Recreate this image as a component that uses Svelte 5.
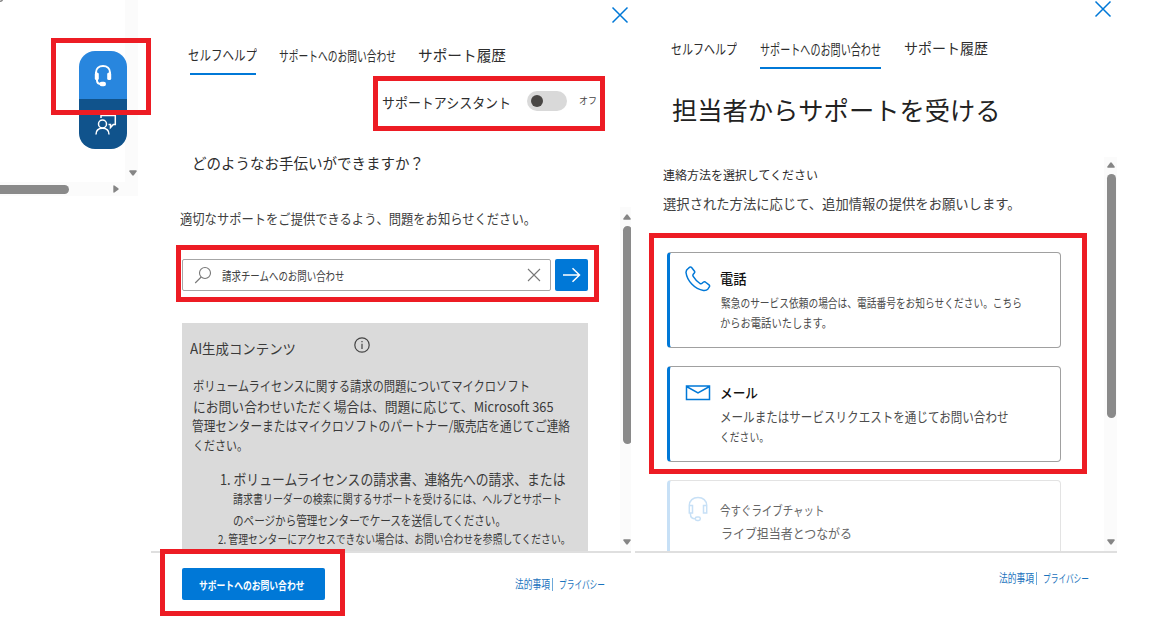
<script>
  // Condenses or stretches a label so that it fills the measure given for it.
  function fit(node, width) {
    const apply = (w) => {
      node.style.transform = 'none';
      const natural = node.getBoundingClientRect().width;
      if (natural) node.style.transform = `scaleX(${w / natural})`;
    };
    apply(width);
    return { update: apply };
  }

  const leftTabs = [
    { text: 'セルフヘルプ', w: 69, size: 14, active: true },
    { text: 'サポートへのお問い合わせ', w: 117, size: 14 },
    { text: 'サポート履歴', w: 88, size: 15 }
  ];
  const rightTabs = [
    { text: 'セルフヘルプ', w: 66, size: 14 },
    { text: 'サポートへのお問い合わせ', w: 121, size: 14.3, active: true },
    { text: 'サポート履歴', w: 84, size: 14.5 }
  ];
  const answer = [
    { text: 'ボリュームライセンスに関する請求の問題についてマイクロソフト', w: 337, size: 13.3 },
    { text: 'にお問い合わせいただく場合は、問題に応じて、Microsoft 365', w: 360.5, size: 13.6 },
    { text: '管理センターまたはマイクロソフトのパートナー/販売店を通じてご連絡', w: 378, size: 13.3 },
    { text: 'ください。', w: 55, size: 12.6 }
  ];
</script>

{#snippet label(text, w, size)}
  <span class="label" style="width:{w}px;font-size:{size}px"><span class="ink" use:fit={w}>{text}</span></span>
{/snippet}

{#snippet closeIcon()}
  <svg class="close" width="18" height="18" viewBox="0 0 18 18"><path d="M1.5 1.5 16.5 16.5M16.5 1.5 1.5 16.5" /></svg>
{/snippet}

{#snippet legal()}
  <div class="legal">
    {@render label('法的事項', 35, 12)}
    <i></i>
    {@render label('プライバシー', 46, 11.3)}
  </div>
{/snippet}

{#snippet arrow(dir)}
  <svg class="tri {dir}" width="8" height="6" viewBox="0 0 8 6"><path d="M1 5.7Q-.2 5.7.4 4.6L3.2.7Q4 0 4.8.7L7.6 4.6Q8.2 5.7 7 5.7Z" /></svg>
{/snippet}

<main>
  <section class="dock">
    <div class="canvas">
      <svg class="corner" width="5" height="4" viewBox="0 0 5 4"><path d="M0 1.200Q1.700 1.400 2.500 0" /></svg>
      <div class="pill">
        <button class="help" aria-label="help">
          <svg width="20" height="24" viewBox="0 0 20 24">
            <path d="M3 10V8.500C3 4.500 6 2 10 2S17 4.500 17 8.500V10" fill="none" stroke="#fff" stroke-width="2" />
            <rect x="1.800" y="8.500" width="4" height="7.500" rx="1.600" fill="#fff" />
            <rect x="14.200" y="8.500" width="4" height="7.500" rx="1.600" fill="#fff" />
            <path d="M4 14.500V16.500C4 19 6 20 8.500 20" fill="none" stroke="#fff" stroke-width="2" />
            <rect x="6.500" y="17.800" width="6.500" height="4.500" rx="2.200" fill="#fff" />
          </svg>
        </button>
        <button class="feedback" aria-label="feedback">
          <svg width="24" height="24" viewBox="0 0 24 24" fill="none" stroke="#fff" stroke-width="1.500">
            <path d="M8 7V4.500H22.300V13.500H20.300L17.500 16.500V13.500H15.500" />
            <circle cx="9.500" cy="13" r="4" />
            <path d="M3 23.500C3 19.500 5.500 17.200 9.500 17.200S16 19.500 16 23.500" />
          </svg>
        </button>
      </div>
    </div>
    <div class="vtrack">{@render arrow('down')}</div>
    <div class="htrack"><i></i>{@render arrow('right')}</div>
  </section>

  <section class="panel first">
    <header>{@render closeIcon()}</header>
    <nav>
      {#each leftTabs as tab}
        <div class="tab" class:active={tab.active}>{@render label(tab.text, tab.w, tab.size)}</div>
      {/each}
    </nav>
    <div class="assistant">
      {@render label('サポートアシスタント', 129, 14)}
      <div class="toggle"><i></i></div>
      <small>{@render label('オフ', 18, 9.5)}</small>
    </div>
    <h2>{@render label('どのようなお手伝いができますか？', 232, 15)}</h2>

    <div class="body">
      <div class="scroll">
        <p class="lead">{@render label('適切なサポートをご提供できるよう、問題をお知らせください。', 356, 13.7)}</p>
        <div class="search">
          <div class="field">
            <svg width="18" height="18" viewBox="0 0 18 18"><circle cx="11" cy="7" r="5.500" /><path d="M7.200 11 1.200 17" /></svg>
            {@render label('請求チームへのお問い合わせ', 122.5, 12.3)}
            <svg class="clear" width="14" height="14" viewBox="0 0 14 14"><path d="M1 1 13 13M13 1 1 13" /></svg>
          </div>
          <button class="go" aria-label="search">
            <svg width="20" height="16" viewBox="0 0 20 16"><path d="M1 8H17.500M10.500 1.200 17.500 8 10.500 14.800" /></svg>
          </button>
        </div>
        <article>
          <div class="title">
            {@render label('AI生成コンテンツ', 106, 14)}
            <svg width="16" height="16" viewBox="0 0 16 16"><circle cx="8" cy="8" r="7.200" /><path d="M8 6.700V12M8 4V5.300" /></svg>
          </div>
          <div class="answer">
            {#each answer as line}
              <p>{@render label(line.text, line.w, line.size)}</p>
            {/each}
          </div>
          <div class="steps">
            <p class="one">{@render label('1. ボリュームライセンスの請求書、連絡先への請求、または', 345.5, 14.8)}</p>
            <p class="sub">{@render label('請求書リーダーの検索に関するサポートを受けるには、ヘルプとサポート', 329, 12.3)}</p>
            <p class="sub">{@render label('のページから管理センターでケースを送信してください。', 273, 12.9)}</p>
            <p class="two">{@render label('2. 管理センターにアクセスできない場合は、お問い合わせを参照してください。', 352.5, 12)}</p>
          </div>
        </article>
      </div>
      <div class="bar">{@render arrow('up')}<i></i>{@render arrow('down')}</div>
    </div>
    <footer>
      <button class="contact">{@render label('サポートへのお問い合わせ', 105.5, 11)}</button>
      {@render legal()}
    </footer>
  </section>

  <section class="panel second">
    <header>{@render closeIcon()}</header>
    <nav>
      {#each rightTabs as tab}
        <div class="tab" class:active={tab.active}>{@render label(tab.text, tab.w, tab.size)}</div>
      {/each}
    </nav>
    <h1>{@render label('担当者からサポートを受ける', 328.5, 25.3)}</h1>
    <div class="body">
      <div class="scroll">
        <p class="choose">{@render label('連絡方法を選択してください', 155, 12.2)}</p>
        <p class="note">{@render label('選択された方法に応じて、追加情報の提供をお願いします。', 357.5, 13.7)}</p>
        <div class="card">
          <svg width="26" height="26" viewBox="0 0 26 26"><path d="M3.300 2.300 4.800 1.200Q5.800.7 6.600 1.600L9.500 5.200Q10.100 6.200 9.300 7.100L8.100 8.500Q7.600 9.400 8.200 10.300Q10.800 14.600 15 17.500Q16.200 18.200 17.100 17.300L18.500 16Q19.300 15.400 20.300 16L24 18.800Q25 19.700 24.300 20.900L23 22.900Q21.500 24.700 18.500 24.400C9.500 23.200 2 14.500 1 6.500Q.9 3.800 3.300 2.300Z" /></svg>
          <div class="copy">
            <h3>{@render label('電話', 26.5, 13.5)}</h3>
            <p class="in">{@render label('緊急のサービス依頼の場合は、電話番号をお知らせください。こちら', 301, 12.5)}</p>
            <p>{@render label('からお電話いたします。', 112, 12.2)}</p>
          </div>
        </div>
        <div class="card mail">
          <svg width="26" height="26" viewBox="0 0 26 26"><path d="M1.500 6H24.500V19.500H1.500ZM1.500 6.500 13 13 24.500 6.500" /></svg>
          <div class="copy">
            <h3>{@render label('メール', 38, 13.5)}</h3>
            <p>{@render label('メールまたはサービスリクエストを通じてお問い合わせ', 288.5, 13.5)}</p>
            <p>{@render label('ください。', 49, 12)}</p>
          </div>
        </div>
        <div class="card muted">
          <svg width="26" height="26" viewBox="0 0 26 26"><path d="M4.300 10V9.500C4.300 4.500 8 1.500 13 1.500S21.700 4.500 21.700 9.500V10M4.300 9.500H7.500V17H4.300ZM18.500 9.500H21.700V17H18.500ZM5.500 17V18.500C5.500 21.500 7 22.700 10.300 22.700" /><rect x="10.300" y="21" width="5" height="3.500" rx="1.700" /></svg>
          <div class="copy">
            <h3>{@render label('今すぐライブチャット', 104.5, 12.8)}</h3>
            <p class="in">{@render label('ライブ担当者とつながる', 131, 13)}</p>
          </div>
        </div>
      </div>
      <div class="bar">{@render arrow('up')}<i></i>{@render arrow('down')}</div>
    </div>
    <footer>{@render legal()}</footer>
  </section>

  <div class="mark m1"></div>
  <div class="mark m2"></div>
  <div class="mark m3"></div>
  <div class="mark m4"></div>
  <div class="mark m5"></div>
</main>

<style>
  :global(body) { margin: 0; background: #fff; }
  main {
    position: relative;
    display: grid;
    grid-template-columns: 151px 480px 482px;
    column-gap: 0;
    width: 1149px;
    height: 634px;
    overflow: hidden;
    font-family: 'Noto Sans CJK JP', 'Noto Sans', sans-serif;
    color: #2d2d2d;
    background: #fff;
  }
  main, main * { box-sizing: border-box; }
  h1, h2, h3, p { margin: 0; font-weight: 400; }
  button { border: 0; padding: 0; margin: 0; font-family: inherit; color: inherit; }
  svg { display: block; flex: none; fill: none; }

  .label { display: block; flex: none; height: 20px; line-height: 20px; white-space: nowrap; }
  .ink { display: inline-block; transform-origin: 0 50%; vertical-align: top; }
  .tri { width: 8px; height: 6px; }
  .tri path { fill: #858585; }
  .down { transform: rotate(180deg); }
  .right { transform: rotate(90deg); }

  .dock {
    display: grid;
    grid-template: 182px 14px / 125px 13px;
    align-content: start;
  }
  .canvas { padding-left: 79px; z-index: 1; }
  .corner { margin-left: -79px; }
  .corner path { stroke: #858585; stroke-width: 1.5; }
  .pill { width: 48px; height: 98px; margin-top: 47px; border-radius: 16px; overflow: hidden; }
  .pill button { display: flex; justify-content: center; width: 48px; height: 48px; }
  .help { background: #2886de; padding-top: 13px; }
  .pill .feedback { height: 50px; background: #10538c; padding-top: 12px; }
  .feedback svg { margin-left: 4px; }
  .vtrack { background: #fbfbfb; display: flex; align-items: flex-end; justify-content: center; padding: 0 0 6px 2px; }
  .htrack { grid-column: 1 / 3; background: #fbfbfb; display: flex; align-items: center; }
  .htrack i { width: 69px; height: 9px; border-radius: 0 5px 5px 0; background: #8a8a8a; }
  .htrack .tri { margin-left: 43px; }

  .panel { display: flex; flex-direction: column; min-width: 0; }
  .panel header { display: flex; justify-content: flex-end; }
  .close path { stroke: #0078d7; stroke-width: 1.5; }
  nav { display: flex; }
  .tab { height: 30px; }
  .tab.active::after { content: ''; display: block; height: 2px; margin-top: 9px; background: #0078d7; }

  .body { display: flex; border-bottom: 2px solid #dfdfdf; overflow: hidden; }
  .scroll { flex: 1; min-width: 0; }
  .bar { display: flex; flex-direction: column; align-items: center; background: #fbfbfb; flex: none; }
  .bar i { background: #8a8a8a; width: 9px; border-radius: 5px; }
  .bar .down { margin-top: auto; }

  .legal { display: flex; color: #1a73bd; }
  .legal i { width: 1px; height: 13px; margin: 4px 6px 0 2px; background: #6ea9da; }

  .first header { height: 44px; padding: 6px 2.5px 0 0; }
  .first nav { padding-left: 37px; height: 31px; }
  .first .tab:nth-child(2) { margin-left: 22px; padding-top: 1px; }
  .first .tab:nth-child(3) { margin-left: 22px; padding-top: 1px; }
  .first .tab.active::after { margin-left: 2px; width: 66px; }
  .assistant { display: flex; height: 36px; padding: 16px 0 0 231px; }
  .assistant > .label { margin-top: 1px; }
  .toggle { width: 40px; height: 20px; margin-left: 16px; padding: 4px; border-radius: 10px; background: #d9d9d9; }
  .toggle i { display: block; width: 12px; height: 12px; border-radius: 50%; background: #484644; }
  small { margin: -1px 0 0 12px; color: #444; }
  .first h2 { height: 96px; padding: 42px 0 0 40.5px; }
  .first .body { height: 346px; }
  .first .scroll { padding-left: 31px; }
  .lead { height: 52px; margin-left: -2px; padding-top: 1px; color: #404040; }
  .search { display: flex; gap: 4px; }
  .field { display: flex; align-items: center; width: 369.4px; height: 32px; padding: 0 10px 0 11px; border: 1px solid #a6a6a6; border-radius: 2px; }
  .field svg { stroke: #777; stroke-width: 1.1; }
  .field .label { margin: 1px 0 0 10px; color: #404040; }
  .field .clear { margin-left: auto; margin-right: -1px; }
  .go { width: 33px; height: 32px; border-radius: 2px; background: #0078d7; display: flex; align-items: center; justify-content: center; }
  .go svg { stroke: #fff; stroke-width: 1.5; }
  article { width: 406px; height: 228px; margin-top: 32px; background: #dadada; color: #3a3a3a; }
  .title { display: flex; height: 53px; padding: 15px 0 0 7.500px; }
  .title svg { margin: -1px 0 0 58.500px; stroke: #444; stroke-width: 1.2; }
  .answer { padding-left: 11px; }
  .answer p { height: 20px; }
  .answer p:nth-child(3) { margin-left: -1px; }
  .answer p:nth-child(4) { margin-top: -1px; }
  .steps { padding: 14px 0 0 36px; }
  .steps p { height: 20px; }
  .steps .one { padding-left: 1.5px; }
  .steps .sub { padding-left: 15px; }
  .sub + .sub { margin-top: 1px; }
  .steps .two { margin-top: -1px; }
  .first .bar { width: 11px; padding: 7px 0 6px 3px; align-items: flex-start; overflow: hidden; }
  .first .bar i { height: 218px; margin: 6px 0 0 .4px; }
  .first footer { display: flex; padding: 15px 0 0 31px; }
  .contact { display: flex; width: 143px; height: 32px; padding: 7px 0 0 17px; border-radius: 2px; background: #0078d7; color: #fff; font-weight: 700; }
  .first .legal { margin: 6px 0 0 190px; }

  .second { margin-left: 4px; width: 482px; }
  .second header { height: 38px; padding-right: 5px; }
  .second .close { margin-top: -0.5px; }
  .second nav { padding-left: 36px; height: 38px; }
  .second .tab:nth-child(2) { margin-left: 23.4px; }
  .second .tab:nth-child(2) .label { margin-bottom: -1px; padding-top: 1px; height: 21px; }
  .second .tab:nth-child(3) { margin-left: 22.6px; }
  .second h1 { height: 81px; padding: 23px 0 0 36.5px; color: #222; }
  .second .body { height: 396px; }
  .second .scroll { padding-left: 28px; }
  .choose { padding-top: 8px; }
  .note { height: 59px; padding-top: 8px; margin-left: -0.5px; color: #404040; }
  .card { display: flex; width: 394px; height: 96px; margin: 0 0 18px 4px; padding: 13px 0 0 15px; border: 1px solid #a0a0a0; border-left: 3px solid #0078d7; border-radius: 4px; }
  .note + .card { margin-top: 8px; }
  .card svg { stroke: #0078d7; stroke-width: 1.5; }
  .copy { margin-left: 9px; color: #4c4c4c; }
  .copy h3 { color: #111; font-weight: 500; height: 27px; padding-top: 2px; }
  .copy p { height: 20px; padding-left: .4px; }
  .copy p.in { padding-left: 1.4px; }
  .mail h3 { height: 26px; }
  .mail p + p { margin-top: 1px; }
  .muted { border-color: #e3e3e3; border-left-color: #c7e0f6; }
  .muted svg { margin-top: 2px; stroke: #c7e0f6; }
  .muted .copy h3 { color: #666; font-weight: 400; padding-top: 6px; height: 29px; }
  .muted p { color: #666; }
  .second .bar { width: 13px; padding: 5px 0 6px 1px; }
  .second .bar i { height: 244px; margin-top: 6px; }
  .second .legal { padding: 15px 0 0 364px; }

  .mark { position: absolute; z-index: 2; border: 5px solid #ed1c24; pointer-events: none; }
  .m1 { left: 51px; top: 38px; width: 100px; height: 77px; }
  .m2 { left: 373px; top: 76px; width: 232px; height: 55px; }
  .m3 { left: 176px; top: 245px; width: 423px; height: 57px; }
  .m4 { left: 160px; top: 549px; width: 185px; height: 67px; }
  .m5 { left: 649px; top: 233px; width: 438px; height: 241px; }
</style>
